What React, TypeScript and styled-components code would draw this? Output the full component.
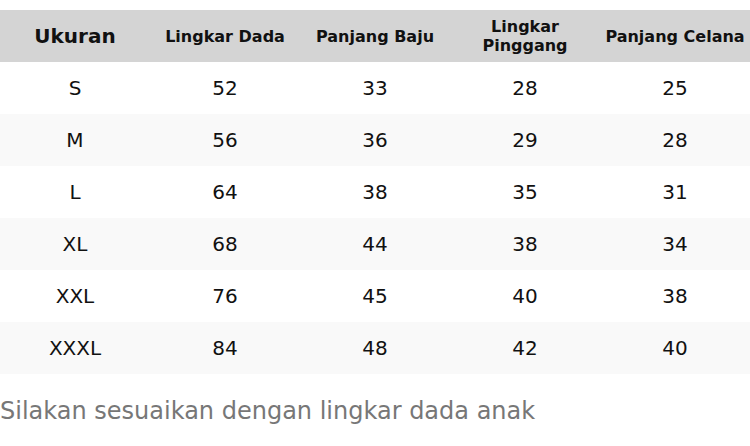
import React from 'react';
import styled, { createGlobalStyle } from 'styled-components';

const GlobalStyle = createGlobalStyle`
  body {
    margin: 0;
    background: #ffffff;
    font-family: "DejaVu Sans", "Liberation Sans", sans-serif;
  }
`;

const columns = [
  'Ukuran',
  'Lingkar Dada',
  'Panjang Baju',
  'Lingkar Pinggang',
  'Panjang Celana',
];

const rows: string[][] = [
  ['S', '52', '33', '28', '25'],
  ['M', '56', '36', '29', '28'],
  ['L', '64', '38', '35', '31'],
  ['XL', '68', '44', '38', '34'],
  ['XXL', '76', '45', '40', '38'],
  ['XXXL', '84', '48', '42', '40'],
];

const Page = styled.div`
  padding-top: 10px;
  width: 750px;
`;

const SizeTable = styled.table`
  width: 750px;
  border-collapse: collapse;
  table-layout: fixed;
`;

const HeadCell = styled.th<{ $main?: boolean }>`
  height: 52px;
  padding: 0 2px;
  background: #d4d4d4;
  color: #111111;
  font-size: ${(props) => (props.$main ? '20px' : '16px')};
  line-height: 19px;
  font-weight: bold;
  text-align: center;
  vertical-align: middle;
`;

const BodyRow = styled.tr<{ $striped: boolean }>`
  background: ${(props) => (props.$striped ? '#f9f9f9' : '#ffffff')};
`;

const Cell = styled.td`
  height: 52px;
  padding: 0;
  font-size: 20px;
  color: #111111;
  text-align: center;
  vertical-align: middle;
`;

const Note = styled.p`
  margin: 23px 0 0;
  font-size: 24px;
  color: #777777;
`;

const App = (): JSX.Element => {
  return (
    <Page>
      <GlobalStyle />
      <SizeTable>
        <thead>
          <tr>
            {columns.map((c, i) => (
              <HeadCell key={c} $main={i === 0}>
                {c}
              </HeadCell>
            ))}
          </tr>
        </thead>
        <tbody>
          {rows.map((r, i) => (
            <BodyRow key={r[0]} $striped={i % 2 === 1}>
              {r.map((v, j) => (
                <Cell key={j}>{v}</Cell>
              ))}
            </BodyRow>
          ))}
        </tbody>
      </SizeTable>
      <Note>Silakan sesuaikan dengan lingkar dada anak</Note>
    </Page>
  );
};

export default App;
